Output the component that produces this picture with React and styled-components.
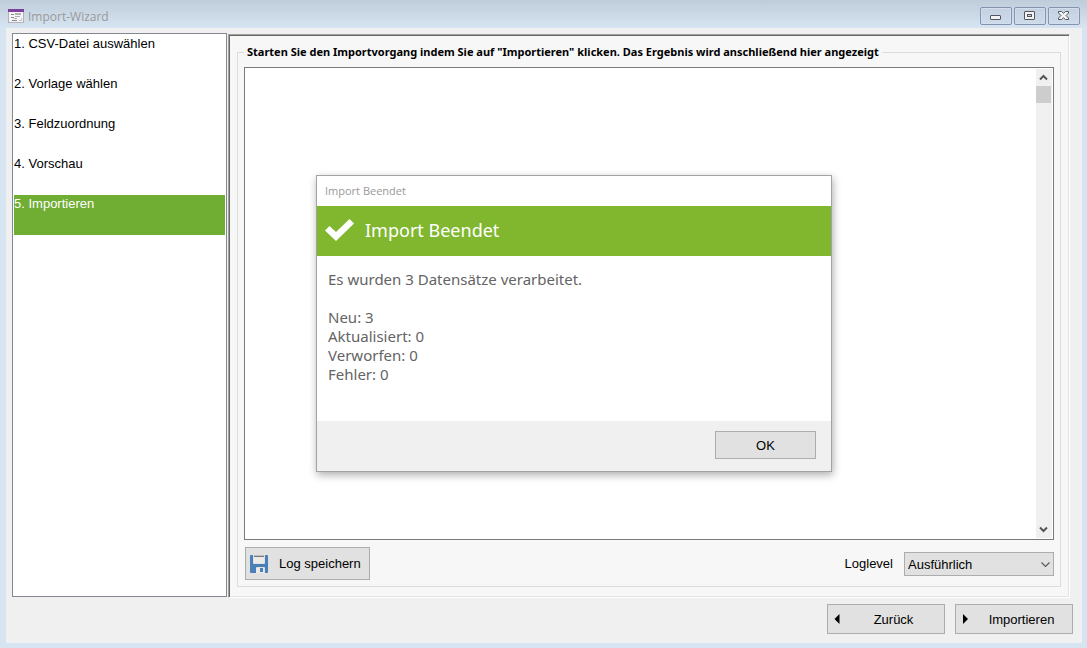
import React, { useState } from 'react';
import styled, { createGlobalStyle } from 'styled-components';

const GlobalStyle = createGlobalStyle`
  * {
    box-sizing: border-box;
  }

  body {
    margin: 0;
    font-family: "Liberation Sans", Arial, sans-serif;
    font-size: 13px;
    color: #000;
  }

  button, select, textarea {
    font: inherit;
    color: inherit;
  }
`;

const Window = styled.div`
  position: relative;
  display: flex;
  flex-direction: column;
  min-height: 100vh;
  padding: 0 5px 5px 6px;
  background: #d7e4f2 linear-gradient(#bfcddb, #d7e4f2) no-repeat 0 0 / 100% 28px;
`;

const TitleBar = styled.header`
  display: flex;
  align-items: center;
  height: 28px;
  padding: 4px 2px 0;
`;

const WindowTitle = styled.h1`
  flex: 1;
  margin: 0 0 0 4px;
  font-family: "Open Sans", sans-serif;
  font-size: 12px;
  font-weight: normal;
  color: #999;
`;

const WindowButtons = styled.div`
  display: flex;
  gap: 2px;
`;

const WindowButton = styled.button`
  display: flex;
  align-items: center;
  justify-content: center;
  width: 32px;
  height: 18px;
  padding: 0;
  border: 1px solid #8593b0;
  border-radius: 2px;
  background: linear-gradient(#c3d1e0, #cddbea);
  box-shadow: inset 0 0 0 1px #d3dfec;
`;

const Client = styled.div`
  display: flex;
  flex: 1;
  flex-direction: column;
  padding: 5px 9px 9px 6px;
  background: #f0f0f0;
`;

const Content = styled.div`
  display: flex;
  flex: 1;
  gap: 1px;
  padding-right: 3px;
`;

const StepList = styled.ol`
  flex: 0 0 215px;
  margin: 0 0 1px;
  padding: 1px;
  border: 1px solid #828790;
  background: #fff;
  list-style: none;
`;

const Step = styled.li`
  height: 40px;
  line-height: 17px;
  background: ${({ $active }) => ($active ? '#70ad33' : 'transparent')};
  color: ${({ $active }) => ($active ? '#fff' : '#000')};
`;

const Panel = styled.main`
  display: flex;
  flex: 1;
  margin-top: 1px;
  padding: 10px 8px;
  border: 1px solid;
  border-color: #a0a0a0 #fff #fff #a0a0a0;
  background: #f7f7f7;
  box-shadow: inset 1px 1px #696969, inset -1px -1px #e3e3e3;
`;

const Group = styled.fieldset`
  display: flex;
  flex: 1;
  flex-direction: column;
  min-width: 0;
  margin: 0;
  padding: 8px 6px 6px;
  border: 1px solid #dcdcdc;
`;

const Legend = styled.legend`
  padding: 0 3px;
  font-family: "Noto Sans", "Liberation Sans", sans-serif;
  font-size: 11px;
  font-weight: bold;
  line-height: 14px;
`;

const LogBox = styled.div`
  display: flex;
  flex: 1;
  padding: 1px;
  border: 1px solid #7a7a7a;
  background: #fff;
`;

const LogText = styled.textarea`
  flex: 1;
  min-width: 0;
  padding: 2px;
  border: 0;
  outline: 0;
  background: transparent;
  resize: none;
  overflow: hidden;
`;

const ScrollBar = styled.div`
  display: flex;
  flex-direction: column;
  width: 16px;
  background: #f0f0f0;
`;

const ScrollArrow = styled.button`
  display: flex;
  align-items: center;
  justify-content: center;
  width: 15px;
  height: 17px;
  padding: 0;
  border: 0;
  background: transparent;
`;

const ScrollTrack = styled.div`
  flex: 1;
`;

const ScrollThumb = styled.div`
  width: 15px;
  height: 17px;
  background: #cdcdcd;
`;

const LogActions = styled.div`
  display: flex;
  align-items: center;
  justify-content: space-between;
  padding: 7px 0 0 1px;
`;

const Button = styled.button`
  border: 1px solid #adadad;
  background: #e1e1e1;
`;

const SaveButton = styled(Button)`
  display: flex;
  align-items: center;
  gap: 11px;
  height: 33px;
  padding: 0 8px 0 4px;
`;

const LevelField = styled.div`
  display: flex;
  align-items: center;
  gap: 11px;
`;

const SelectBox = styled.div`
  position: relative;
  width: 150px;

  svg {
    position: absolute;
    top: 9px;
    right: 4px;
    pointer-events: none;
  }
`;

const Select = styled.select`
  display: block;
  width: 100%;
  height: 24px;
  padding: 1px 20px 0 3px;
  border: 1px solid #adadad;
  border-radius: 0;
  background: #e1e1e1;
  appearance: none;
`;

const Navigation = styled.footer`
  display: flex;
  justify-content: flex-end;
  gap: 10px;
  padding-top: 6px;
`;

const NavButton = styled(Button)`
  display: flex;
  align-items: center;
  gap: 12px;
  width: 118px;
  height: 30px;
  padding: 0 9px 0 6px;

  span {
    flex: 1;
  }
`;

const Dialog = styled.section`
  position: absolute;
  top: 175px;
  left: 316px;
  width: 516px;
  border: 1px solid #a3a3a3;
  background: #fff;
  box-shadow: 1px 3px 8px rgba(0, 0, 0, 0.32);
`;

const DialogTitle = styled.div`
  padding: 0 8px;
  font-family: "Open Sans", sans-serif;
  font-size: 11px;
  line-height: 30px;
  color: #999;
`;

const DialogBanner = styled.div`
  display: flex;
  align-items: center;
  gap: 11px;
  height: 50px;
  padding: 0 8px 2px;
  background: #80b72f;
  color: #fff;
`;

const DialogHeading = styled.h2`
  margin: 0;
  font-family: "Noto Sans", sans-serif;
  font-size: 18px;
  font-weight: normal;
`;

const DialogText = styled.div`
  height: 165px;
  padding: 14px 11px;
  font-family: "Noto Sans", sans-serif;
  font-size: 15px;
  line-height: 19px;
  color: #646464;

  p {
    margin: 0 0 19px;
  }
`;

const DialogFooter = styled.div`
  display: flex;
  justify-content: flex-end;
  padding: 10px 15px 12px;
  background: #f0f0f0;
`;

const OkButton = styled(Button)`
  width: 101px;
  height: 28px;
`;

const AppIcon = () => (
  <svg width="16" height="14" viewBox="0 0 16 14" shapeRendering="crispEdges">
    <rect width="16" height="14" rx="1" fill="#b4b0ba" />
    <rect width="16" height="3" fill="#7c3fa0" />
    <rect x="1" y="3" width="14" height="10" fill="#f4f4f6" />
    <path d="M3 5h3v1H3zM3 8h3v1H3zM4 11h5v1H4z" fill="#888" />
    <path d="M7 4h6v2H7zM7 7h5v1H7zM6 9h3v1H6z" fill="#b0b0b0" />
    <path d="M13 9h1v3h-3v-1h2z" fill="#c5c5c5" />
  </svg>
);

const MinimizeIcon = () => (
  <svg width="12" height="12" viewBox="0 0 12 12">
    <rect x="0.5" y="5.5" width="10" height="4" rx="0.5" fill="#f3f3f3" stroke="#53565f" />
  </svg>
);

const MaximizeIcon = () => (
  <svg width="12" height="10" viewBox="0 0 12 10">
    <rect x="0.5" y="0.5" width="10" height="8" rx="0.5" fill="#f3f3f3" stroke="#53565f" />
    <rect x="3.5" y="3.5" width="4" height="2" fill="#c5d3e4" stroke="#53565f" />
  </svg>
);

const CloseIcon = () => (
  <svg width="12" height="10" viewBox="0 0 12 10">
    <path
      d="M.5 .5h3l2 1.8 2-1.8h3V2L8 4.5 10.5 7v1.5h-3l-2-1.8-2 1.8h-3V7L3 4.5 .5 2z"
      fill="#f3f3f3"
      stroke="#53565f"
    />
  </svg>
);

const ArrowIcon = ({ up }) => (
  <svg width="9" height="7" viewBox="0 0 9 7">
    <path d={up ? 'M1 5.5l3.5-3.5L8 5.5' : 'M1 1.5L4.5 5 8 1.5'} fill="none" stroke="#555" strokeWidth="2" />
  </svg>
);

const ChevronIcon = () => (
  <svg width="9" height="7" viewBox="0 0 9 7">
    <path d="M.5 1.5l4 4 4-4" fill="none" stroke="#555" strokeWidth="1.1" />
  </svg>
);

const SaveIcon = () => (
  <svg width="18" height="18" viewBox="0 0 18 18">
    <path
      d="M1 0h2v8q0 1 1 1h10q1 0 1-1V0h2q1 0 1 1v16q0 1-1 1h-2v-5q0-1-1-1H7q-1 0-1 1v5H1q-1 0-1-1V1q0-1 1-1z"
      fill="#4a80b8"
    />
    <path d="M4 0h10v1H4z" fill="#c4c0bc" />
    <path d="M4 1h10v1H4z" fill="#777" />
    <path d="M4 2h10v6H4zM6 13h8v5H6z" fill="#eceae6" />
    <path d="M10 13h3v4h-3z" fill="#4a80b8" />
  </svg>
);

const CheckIcon = () => (
  <svg width="29" height="22" viewBox="0 0 29 22">
    <path d="M0 11.5L4.5 7l6.5 6L24.5 0 29 4.5 11 22z" fill="#fff" />
  </svg>
);

const Triangle = ({ right }) => (
  <svg width="6" height="10" viewBox="0 0 6 10">
    <path d={right ? 'M1 0v10l5-5z' : 'M5.5 0v10l-5-5z'} />
  </svg>
);

const steps = [
  'CSV-Datei auswählen',
  'Vorlage wählen',
  'Feldzuordnung',
  'Vorschau',
  'Importieren',
];

const results = [
  ['Neu', 3],
  ['Aktualisiert', 0],
  ['Verworfen', 0],
  ['Fehler', 0],
];

const App = () => {
  const [step, setStep] = useState(4);
  const [level, setLevel] = useState('Ausführlich');
  const [finished, setFinished] = useState(true);

  return (
    <Window>
      <GlobalStyle />
      <TitleBar>
        <AppIcon />
        <WindowTitle>Import-Wizard</WindowTitle>
        <WindowButtons>
          <WindowButton aria-label="Minimieren"><MinimizeIcon /></WindowButton>
          <WindowButton aria-label="Maximieren"><MaximizeIcon /></WindowButton>
          <WindowButton aria-label="Schließen"><CloseIcon /></WindowButton>
        </WindowButtons>
      </TitleBar>

      <Client>
        <Content>
          <StepList>
            {steps.map((name, i) => (
              <Step key={name} $active={i === step}>{i + 1}. {name}</Step>
            ))}
          </StepList>

          <Panel>
            <Group>
              <Legend>
                Starten Sie den Importvorgang indem Sie auf "Importieren" klicken. Das Ergebnis wird anschließend hier angezeigt
              </Legend>
              <LogBox>
                <LogText aria-label="Ergebnis" readOnly />
                <ScrollBar>
                  <ScrollArrow aria-label="Nach oben"><ArrowIcon up /></ScrollArrow>
                  <ScrollTrack><ScrollThumb /></ScrollTrack>
                  <ScrollArrow aria-label="Nach unten"><ArrowIcon /></ScrollArrow>
                </ScrollBar>
              </LogBox>
              <LogActions>
                <SaveButton type="button">
                  <SaveIcon />
                  Log speichern
                </SaveButton>
                <LevelField>
                  <label htmlFor="loglevel">Loglevel</label>
                  <SelectBox>
                    <Select id="loglevel" value={level} onChange={(e) => setLevel(e.target.value)}>
                      <option>Ausführlich</option>
                      <option>Normal</option>
                    </Select>
                    <ChevronIcon />
                  </SelectBox>
                </LevelField>
              </LogActions>
            </Group>
          </Panel>
        </Content>

        <Navigation>
          <NavButton type="button" onClick={() => setStep(Math.max(0, step - 1))}>
            <Triangle />
            <span>Zurück</span>
          </NavButton>
          <NavButton type="button" onClick={() => setFinished(true)}>
            <Triangle right />
            <span>Importieren</span>
          </NavButton>
        </Navigation>
      </Client>

      {finished && (
        <Dialog role="dialog" aria-labelledby="dialog-heading">
          <DialogTitle>Import Beendet</DialogTitle>
          <DialogBanner>
            <CheckIcon />
            <DialogHeading id="dialog-heading">Import Beendet</DialogHeading>
          </DialogBanner>
          <DialogText>
            <p>Es wurden 3 Datensätze verarbeitet.</p>
            {results.map(([label, count]) => (
              <div key={label}>{label}: {count}</div>
            ))}
          </DialogText>
          <DialogFooter>
            <OkButton type="button" onClick={() => setFinished(false)}>OK</OkButton>
          </DialogFooter>
        </Dialog>
      )}
    </Window>
  );
};

export default App;
